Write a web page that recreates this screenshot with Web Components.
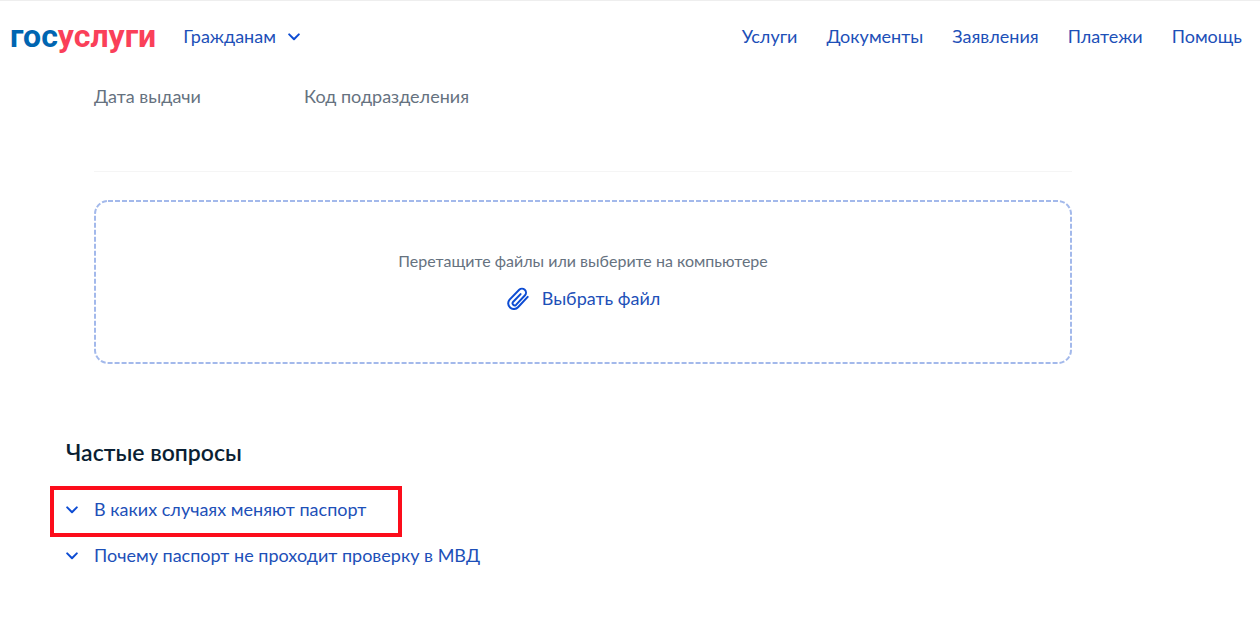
<!DOCTYPE html>
<html lang="ru">
<head>
  <meta charset="utf-8">
  <meta name="viewport" content="width=device-width, initial-scale=1">
  <title>Госуслуги</title>
  <style>
    body {
      margin: 0;
      background: #fff;
      color: #0b1f33;
      font-family: Lato, "Open Sans", sans-serif;
      font-size: 18px;
      line-height: 24px;
    }
  </style>
</head>
<body>
  <gu-header>
    <gu-nav-link href="#services">Услуги</gu-nav-link>
    <gu-nav-link href="#documents">Документы</gu-nav-link>
    <gu-nav-link href="#orders">Заявления</gu-nav-link>
    <gu-nav-link href="#payments">Платежи</gu-nav-link>
    <gu-nav-link href="#help">Помощь</gu-nav-link>
  </gu-header>
  <gu-page>
    <gu-passport>
      <span slot="date">Дата выдачи</span>
      <span slot="code">Код подразделения</span>
      <gu-dropzone>Перетащите файлы или выберите на компьютере</gu-dropzone>
    </gu-passport>
    <gu-faq>
      <span slot="title">Частые вопросы</span>
      <gu-question marked>В каких случаях меняют паспорт</gu-question>
      <gu-question>Почему паспорт не проходит проверку в МВД</gu-question>
    </gu-faq>
  </gu-page>

  <script>
    'use strict'
    ;(function() {
      // attaches an open shadow root and fills it with the given markup
      const render = (element, html) => {
        const shadow = element.attachShadow({ mode: 'open' })
        shadow.innerHTML = html
        return shadow
      }

      class GuChevron extends HTMLElement {
        constructor() {
          super()
          render(this, `
            <style>
              :host {
                display: block;
                flex: none;
                width: 12px;
                height: 8px;
                margin-top: 2px;
              }
              svg {
                display: block;
              }
            </style>
            <svg width="12" height="8" viewBox="0 0 12 8" aria-hidden="true">
              <path d="M1.2 1.4 6 6.2l4.8-4.8" fill="none" stroke="#0d4cd3" stroke-width="2" stroke-linecap="round" stroke-linejoin="round"/>
            </svg>
          `)
        }
      }

      class GuLogo extends HTMLElement {
        constructor() {
          super()
          render(this, `
            <style>
              :host {
                display: block;
                font: 700 32px/32px Roboto, sans-serif;
              }
              a {
                color: #0065b1;
                text-decoration: none;
              }
              span {
                color: #fa4059;
              }
            </style>
            <a href="#home">гос<span>услуги</span></a>
          `)
        }
      }

      class GuNavLink extends HTMLElement {
        constructor() {
          super()
          const shadow = render(this, `
            <style>
              :host {
                display: block;
              }
              a {
                color: #1d50b8;
                text-decoration: none;
              }
            </style>
            <a><slot></slot></a>
          `)
          shadow.querySelector('a').href = this.getAttribute('href')
        }
      }

      class GuHeader extends HTMLElement {
        constructor() {
          super()
          render(this, `
            <style>
              :host {
                display: block;
                border-top: 1px solid #eee;
              }
              header {
                display: flex;
                align-items: center;
                justify-content: space-between;
                padding: 19px 18px 21px 10px;
              }
              .left,
              nav {
                display: flex;
                align-items: center;
              }
              .left {
                gap: 27px;
              }
              nav {
                gap: 29px;
              }
              button {
                display: flex;
                align-items: center;
                gap: 12px;
                padding: 0;
                border: 0;
                background: none;
                color: #1d50b8;
                font: inherit;
                cursor: pointer;
              }
            </style>
            <header>
              <div class="left">
                <gu-logo></gu-logo>
                <button type="button" aria-haspopup="true">Гражданам <gu-chevron></gu-chevron></button>
              </div>
              <nav><slot></slot></nav>
            </header>
          `)
        }
      }

      class GuPage extends HTMLElement {
        constructor() {
          super()
          render(this, `
            <style>
              :host {
                display: block;
                max-width: 1034px;
                padding: 11px 66px 52px;
              }
            </style>
            <main><slot></slot></main>
          `)
        }
      }

      class GuPassport extends HTMLElement {
        constructor() {
          super()
          render(this, `
            <style>
              :host {
                display: block;
                padding: 0 28px;
              }
              .fields {
                display: grid;
                grid-template-columns: 182px 1fr;
                gap: 28px;
                padding-bottom: 63px;
                margin-bottom: 28px;
                border-bottom: 1px solid #f5f5f5;
                color: #66727f;
              }
            </style>
            <div class="fields">
              <slot name="date"></slot>
              <slot name="code"></slot>
            </div>
            <slot></slot>
          `)
        }
      }

      class GuDropzone extends HTMLElement {
        constructor() {
          super()
          const shadow = render(this, `
            <style>
              :host {
                display: block;
                position: relative;
              }
              .frame {
                position: absolute;
                inset: 0;
                width: 100%;
                height: 100%;
                pointer-events: none;
              }
              .frame rect {
                x: 1px;
                y: 1px;
                width: calc(100% - 2px);
                height: calc(100% - 2px);
                fill: none;
                stroke: #a3b9eb;
                stroke-width: 2px;
                stroke-dasharray: 5 2;
              }
              .content {
                display: flex;
                flex-direction: column;
                align-items: center;
                gap: 13px;
                padding: 49px 16px 54px;
              }
              p {
                margin: 0;
                color: #66727f;
                font-size: 16px;
              }
              button {
                display: flex;
                align-items: center;
                gap: 12px;
                padding: 0;
                border: 0;
                background: none;
                color: #1d50b8;
                font: inherit;
                cursor: pointer;
              }
            </style>
            <svg class="frame" aria-hidden="true"><rect rx="13"/></svg>
            <div class="content">
              <p><slot></slot></p>
              <button type="button">
                <svg width="24" height="24" viewBox="0 0 24 24" aria-hidden="true">
                  <path d="M21.700 10.900 12 21.300a5.700 5.700 0 0 1-8.400-7.700L13.200 3.800a4 4 0 0 1 5.800 5.500L10 18.900a2.100 2.100 0 0 1-3-2.900l7.600-7.900" fill="none" stroke="#0d4cd3" stroke-width="2" stroke-linecap="round" stroke-linejoin="round"/>
                </svg>
                Выбрать файл
              </button>
              <input type="file" aria-label="Файл" hidden>
            </div>
          `)
          const input = shadow.querySelector('input')
          shadow.querySelector('button').addEventListener('click', () => input.click())
        }
      }

      class GuFaq extends HTMLElement {
        constructor() {
          super()
          render(this, `
            <style>
              :host {
                display: block;
                margin-top: 72px;
              }
              h2 {
                margin: 0 0 29px;
                font-size: 23px;
                font-weight: 600;
                line-height: 32px;
              }
              .list {
                display: flex;
                flex-direction: column;
                align-items: flex-start;
                gap: 22px;
              }
            </style>
            <h2><slot name="title"></slot></h2>
            <div class="list"><slot></slot></div>
          `)
        }
      }

      class GuQuestion extends HTMLElement {
        constructor() {
          super()
          render(this, `
            <style>
              :host {
                display: block;
                position: relative;
              }
              /* red frame around the highlighted question */
              :host([marked])::after {
                content: "";
                position: absolute;
                inset: -11px -36px -16px -16px;
                border: 4px solid #fc0d1b;
                pointer-events: none;
              }
              button {
                display: flex;
                align-items: center;
                gap: 16px;
                padding: 0;
                border: 0;
                background: none;
                color: #1d50b8;
                font: inherit;
                text-align: left;
                cursor: pointer;
              }
            </style>
            <button type="button" aria-expanded="false"><gu-chevron></gu-chevron><slot></slot></button>
          `)
        }
      }

      // let the browser know about the custom elements
      customElements.define('gu-chevron', GuChevron)
      customElements.define('gu-logo', GuLogo)
      customElements.define('gu-nav-link', GuNavLink)
      customElements.define('gu-header', GuHeader)
      customElements.define('gu-page', GuPage)
      customElements.define('gu-passport', GuPassport)
      customElements.define('gu-dropzone', GuDropzone)
      customElements.define('gu-faq', GuFaq)
      customElements.define('gu-question', GuQuestion)
    })()
  </script>
</body>
</html>
